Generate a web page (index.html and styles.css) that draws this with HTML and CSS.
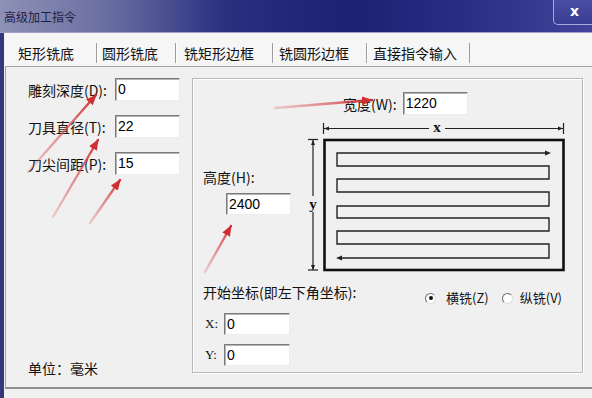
FILE: index.html
```html
<!DOCTYPE html>
<html lang="zh-CN">
<head>
    <meta charset="UTF-8">
    <title>高级加工指令</title>
    <link rel="stylesheet" href="styles.css">
</head>
<body>
    <div class="window">
        <div class="titlebar">
            <span class="title">高级加工指令</span>
            <span class="close">x</span>
        </div>

        <div class="body">
            <div class="tabs">
                <div class="tab active">矩形铣底</div>
                <div class="tab">圆形铣底</div>
                <div class="tab">铣矩形边框</div>
                <div class="tab">铣圆形边框</div>
                <div class="tab last">直接指令输入</div>
            </div>

            <div class="pane">
                <div class="left-col">
                    <div class="field">
                        <label>雕刻深度(D):</label>
                        <div class="input">0</div>
                    </div>
                    <div class="field">
                        <label>刀具直径(T):</label>
                        <div class="input">22</div>
                    </div>
                    <div class="field">
                        <label>刀尖间距(P):</label>
                        <div class="input">15</div>
                    </div>
                    <div class="unit">单位：毫米</div>
                </div>

                <div class="group">
                    <div class="height-col">
                        <div class="lbl">高度(H):</div>
                        <div class="input small">2400</div>
                    </div>

                    <div class="diagram-col">
                        <div class="width-row">
                            <span class="lbl">宽度(W):</span>
                            <div class="input">1220</div>
                        </div>
                        <svg class="diagram" width="270" height="156" viewBox="0 0 270 156">
                            <!-- x dimension -->
                            <g stroke="#222" stroke-width="1.2" fill="#222">
                                <line x1="18.5" y1="3" x2="18.5" y2="14"/>
                                <line x1="258.5" y1="3" x2="258.5" y2="14"/>
                                <line x1="19" y1="8.5" x2="124" y2="8.5"/>
                                <line x1="140" y1="8.5" x2="258" y2="8.5"/>
                                <polygon points="19,8.5 24,6.5 24,10.5" stroke="none"/>
                                <polygon points="258,8.5 253,6.5 253,10.5" stroke="none"/>
                            </g>
                            <text x="132" y="12" class="dim">x</text>

                            <!-- y dimension -->
                            <g stroke="#222" stroke-width="1.2" fill="#222">
                                <line x1="3" y1="19.5" x2="13" y2="19.5"/>
                                <line x1="3" y1="150" x2="13" y2="150"/>
                                <line x1="8" y1="20" x2="8" y2="76"/>
                                <line x1="8" y1="92" x2="8" y2="150"/>
                                <polygon points="8,20 6,25 10,25" stroke="none"/>
                                <polygon points="8,150 6,145 10,145" stroke="none"/>
                            </g>
                            <text x="8" y="89" class="dim">y</text>

                            <!-- stock outline -->
                            <rect x="19.5" y="20" width="239" height="130" fill="none" stroke="#111" stroke-width="2.6"/>

                            <!-- tool path -->
                            <path d="M240 33 H32 V46 H244 V59 H32 V72 H244 V86 H32 V98 H244 V111 H32 V124 H244 V138 H36"
                                  fill="none" stroke="#222" stroke-width="1.4"/>
                            <polygon points="246,33 240,30.5 240,35.5" fill="#222"/>
                            <polygon points="31,138 37,135.5 37,140.5" fill="#222"/>
                        </svg>
                    </div>

                    <div class="start">
                        <div class="start-head">
                            <span class="lbl">开始坐标(即左下角坐标):</span>
                            <div class="radios">
                                <span class="radio checked"></span>
                                <span class="radio-text">横铣(Z)</span>
                                <span class="radio"></span>
                                <span class="radio-text">纵铣(V)</span>
                            </div>
                        </div>
                        <div class="coord">
                            <span class="axis">X:</span>
                            <div class="input">0</div>
                        </div>
                        <div class="coord">
                            <span class="axis">Y:</span>
                            <div class="input">0</div>
                        </div>
                    </div>
                </div>
            </div>
        </div>

        <!-- red annotation arrows drawn over the dialog -->
        <svg class="marks" width="592" height="398" viewBox="0 0 592 398">
            <defs>
                <marker id="head" viewBox="0 0 10 8" refX="9" refY="4" markerWidth="4.6" markerHeight="3.7" orient="auto" markerUnits="strokeWidth">
                    <polygon points="0,0 10,4 0,8" fill="#cf2f33"/>
                </marker>
                <linearGradient id="a1" gradientUnits="userSpaceOnUse" x1="28" y1="172" x2="98" y2="93">
                    <stop offset="0" stop-color="#e06a6c" stop-opacity="0.3"/>
                    <stop offset="1" stop-color="#cf2f33"/>
                </linearGradient>
                <linearGradient id="a2" gradientUnits="userSpaceOnUse" x1="53" y1="217" x2="100" y2="137">
                    <stop offset="0" stop-color="#e06a6c" stop-opacity="0.3"/>
                    <stop offset="1" stop-color="#cf2f33"/>
                </linearGradient>
                <linearGradient id="a3" gradientUnits="userSpaceOnUse" x1="90" y1="223" x2="122" y2="177">
                    <stop offset="0" stop-color="#e06a6c" stop-opacity="0.3"/>
                    <stop offset="1" stop-color="#cf2f33"/>
                </linearGradient>
                <linearGradient id="a4" gradientUnits="userSpaceOnUse" x1="275" y1="108" x2="375" y2="100">
                    <stop offset="0" stop-color="#e06a6c" stop-opacity="0.3"/>
                    <stop offset="1" stop-color="#cf2f33"/>
                </linearGradient>
                <linearGradient id="a5" gradientUnits="userSpaceOnUse" x1="205" y1="272" x2="233" y2="223">
                    <stop offset="0" stop-color="#e06a6c" stop-opacity="0.3"/>
                    <stop offset="1" stop-color="#cf2f33"/>
                </linearGradient>
            </defs>
            <g stroke-width="2.4" stroke-linecap="round" marker-end="url(#head)">
                <line x1="28" y1="172" x2="96" y2="95" stroke="url(#a1)"/>
                <line x1="53" y1="217" x2="98" y2="140" stroke="url(#a2)"/>
                <line x1="90" y1="223" x2="120" y2="180" stroke="url(#a3)"/>
                <line x1="275" y1="108" x2="372" y2="100" stroke="url(#a4)"/>
                <line x1="205" y1="272" x2="231" y2="226" stroke="url(#a5)"/>
            </g>
        </svg>
    </div>
</body>
</html>
```

FILE: styles.css
```css
* {
    box-sizing: border-box;
}

body {
    margin: 0;
    background: #f0f0f0;
    font-family: "Noto Sans CJK SC", "Liberation Sans", sans-serif;
    color: #111;
}

.window {
    position: relative;
    width: 592px;
    height: 398px;
    overflow: hidden;
    display: flex;
    flex-direction: column;
}

/* title bar */
.titlebar {
    height: 33px;
    flex: none;
    display: flex;
    justify-content: space-between;
    align-items: flex-start;
    background: linear-gradient(90deg, #8d91b6 0%, #6a6fa2 18%, #2b2f80 38%, #1d2073 60%, #2a2d82 78%, #41449a 100%);
    border-bottom: 1px solid #9ea1c8;
}

.title {
    font-size: 12px;
    line-height: 16px;
    margin: 9px 0 0 4px;
    color: #1f2144;
}

.close {
    width: 44px;
    height: 25px;
    margin-right: -5px;
    border: 1px solid #a9abd8;
    border-top: none;
    border-right: none;
    border-radius: 0 0 0 5px;
    background: linear-gradient(180deg, #4b4fa3, #3a3d92);
    color: #fff;
    font-family: "DejaVu Sans", sans-serif;
    font-weight: bold;
    font-size: 14px;
    line-height: 22px;
    padding-left: 16px;
}

/* dialog body */
.body {
    flex: 1;
    display: flex;
    flex-direction: column;
    border-left: 4px solid #34387a;
    padding-left: 1px;
    background: #f0f0f0;
}

.tabs {
    display: flex;
    height: 33px;
    padding: 10px 0 0 3px;
    flex: none;
    background: #f6f6f6;
}

.tab {
    height: 20px;
    line-height: 20px;
    font-size: 14px;
    padding-left: 6px;
    border-left: 1px solid #9c9c9c;
    box-shadow: inset 1px 0 #fff;
    white-space: nowrap;
}

.tab.active {
    width: 88px;
    padding-left: 10px;
    border-left: none;
    box-shadow: none;
}

.tab:nth-child(2) { width: 79px; padding-left: 5px; }
.tab:nth-child(3) { width: 97px; padding-left: 8px; }
.tab:nth-child(4) { width: 94px; }
.tab:nth-child(5) { width: 104px; }

.tab.last {
    border-right: 1px solid #9c9c9c;
}

.pane {
    height: 323px;
    flex: none;
    display: flex;
    padding: 11px 0 0 22px;
    border-top: 1px solid #a3a3a3;
    border-left: 1px solid #a3a3a3;
    border-bottom: 2px solid #8f8f8f;
}

/* inputs */
.input {
    width: 65px;
    height: 23px;
    background: #fff;
    border: 1px solid;
    border-color: #7b7b7b #ececec #ececec #7b7b7b;
    box-shadow: inset 1px 1px #b4b4b4;
    font-family: "Liberation Sans", sans-serif;
    font-size: 14px;
    line-height: 20px;
    padding-left: 2px;
    color: #000;
}

.input.small {
    height: 22px;
}

/* left column */
.left-col {
    width: 164px;
    flex: none;
    display: flex;
    flex-direction: column;
    gap: 14px;
    padding-bottom: 11px;
}

.field {
    display: flex;
    align-items: center;
}

.field label {
    width: 87px;
    font-size: 14px;
    line-height: 16px;
    white-space: nowrap;
}

.unit {
    margin-top: auto;
    font-size: 14px;
    line-height: 16px;
}

/* group box */
.group {
    width: 391px;
    height: 295px;
    flex: none;
    display: grid;
    grid-template-columns: 112px 1fr;
    grid-template-rows: auto 1fr;
    border: 1px solid #b9b9b9;
    box-shadow: inset 1px 1px #fff, 1px 1px #fff;
}

.lbl {
    font-size: 14px;
    line-height: 16px;
    white-space: nowrap;
}

.height-col {
    padding: 90px 0 0 10px;
}

.height-col .input {
    margin: 8px 0 0 23px;
}

.width-row {
    display: flex;
    align-items: center;
    gap: 6px;
    padding: 13px 0 0 38px;
}

.diagram {
    display: block;
    margin-top: 5px;
}

.dim {
    font-family: "Liberation Serif", serif;
    font-weight: bold;
    font-size: 15px;
    text-anchor: middle;
    fill: #111;
}

.start {
    grid-column: 1 / 3;
    padding: 8px 20px 0 10px;
}

.start-head {
    display: flex;
    justify-content: space-between;
    align-items: flex-start;
}

.radios {
    display: flex;
    align-items: center;
    margin-top: 6px;
    font-size: 13px;
    line-height: 16px;
}

.radio {
    width: 11px;
    height: 11px;
    border-radius: 50%;
    border: 1px solid;
    border-color: #6f6f6f #dedede #dedede #6f6f6f;
    background: #fff;
    position: relative;
    margin-right: 10px;
}

.radio.checked::after {
    content: "";
    position: absolute;
    left: 2.5px;
    top: 2.5px;
    width: 4px;
    height: 4px;
    border-radius: 50%;
    background: #111;
}

.radio-text {
    margin-right: 13px;
}

.radio-text:last-child {
    margin-right: 0;
}

.radio + .radio-text + .radio {
    margin-right: 7px;
}

.coord {
    display: flex;
    align-items: center;
    margin-top: 7px;
}

.coord + .coord {
    margin-top: 9px;
}

.axis {
    width: 21px;
    padding-left: 2px;
    font-family: "Liberation Serif", serif;
    font-size: 13px;
}

.coord .input {
    width: 66px;
    height: 22px;
}

/* annotation overlay */
.marks {
    position: absolute;
    left: 0;
    top: 0;
    pointer-events: none;
}
```
